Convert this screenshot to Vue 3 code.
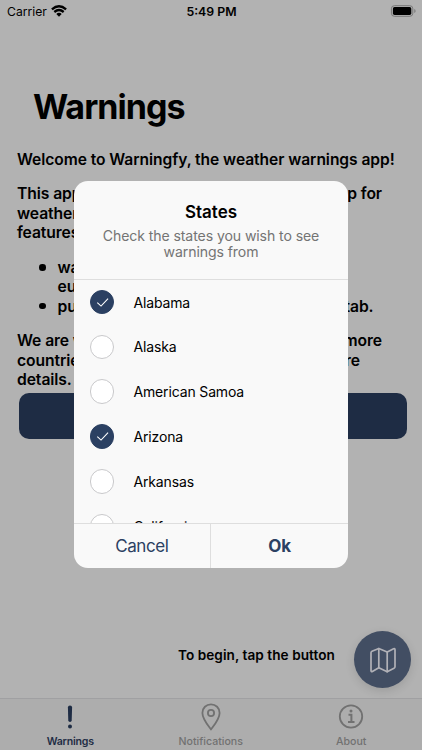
<script setup>
import { ref } from 'vue'

const states = ref([
  { name: 'Alabama', checked: true },
  { name: 'Alaska', checked: false },
  { name: 'American Samoa', checked: false },
  { name: 'Arizona', checked: true },
  { name: 'Arkansas', checked: false },
  { name: 'California', checked: false },
])
</script>

<template>
  <div class="screen">
    <header class="status">
      <div class="carrier">
        <span>Carrier</span>
        <svg class="wifi" viewBox="0 0 16 12">
          <path d="M.9 4.3Q8-1.9 15.1 4.3M3.3 7Q8 3.1 12.7 7" fill="none" stroke="#000" stroke-width="2.3" />
          <path d="M5.3 8.9Q8 6.7 10.7 8.9L8 11.7Z" />
        </svg>
      </div>
      <span class="clock">5:49 PM</span>
      <svg class="battery" viewBox="0 0 26 12">
        <rect x="1.4" y="0.7" width="21.4" height="10.6" rx="3" fill="none" stroke="#777" stroke-width="1" />
        <rect x="2.9" y="2.1" width="18.4" height="7.8" rx="1.6" />
        <path d="M24.3 4Q25.6 4.5 25.6 6T24.3 8Z" fill="#777" />
      </svg>
    </header>

    <main class="content">
      <h1>Warnings</h1>
      <p class="welcome">Welcome to Warningfy, the weather warnings app!</p>
      <div class="copy intro">
        <div class="line"><span>This app is an</span><span>app for</span></div>
        <div class="line">weather warnings</div>
        <div class="line">features:</div>
      </div>
      <ul class="copy">
        <li>
          <div class="line">warnings</div>
          <div class="line">europe</div>
        </li>
        <li>
          <div class="line push"><span>push</span><span>tab.</span></div>
        </li>
      </ul>
      <div class="copy more">
        <div class="line"><span>We are working</span><span>more</span></div>
        <div class="line short"><span>countries</span><span>more</span></div>
        <div class="line">details.</div>
      </div>
      <button class="primary" aria-label="Select states"></button>
      <div class="begin">
        <span>To begin, tap the button</span>
        <button class="fab" aria-label="Map">
          <svg viewBox="0 0 28 28" fill="none" stroke="#b1b1b7" stroke-width="1.7" stroke-linejoin="round" stroke-linecap="round">
            <path d="M9.8 2.5 3 5.2Q2 5.7 2 6.8V24.5Q2 26 3.4 25.4L9.8 21.7 18.2 25.7 25 22.3Q26 21.8 26 20.8V3.7Q26 2.1 24.6 2.8L18.2 6Z" />
            <path d="M9.8 2.5V21.7M18.2 6V25.7" />
          </svg>
        </button>
      </div>
    </main>

    <nav class="tabs">
      <a class="tab active">
        <svg viewBox="0 0 28 28" fill="#1e2c44">
          <path d="M11.9 4.6Q11.9 2.6 14 2.6T16.1 4.6L15.7 17.6Q15.6 19 14 19T12.3 17.6Z" />
          <circle cx="14" cy="23.6" r="2" />
        </svg>
        <span>Warnings</span>
      </a>
      <a class="tab">
        <svg viewBox="0 0 28 28" fill="none" stroke="#717171" stroke-width="1.8">
          <path d="M14 26.5C11.3 22.8 5.4 15.7 5.4 9.9C5.4 5 9.2 1.3 14 1.3S22.6 5 22.6 9.9C22.6 15.7 16.7 22.8 14 26.5Z" stroke-linejoin="round" />
          <circle cx="14" cy="10" r="3.1" />
        </svg>
        <span>Notifications</span>
      </a>
      <a class="tab">
        <svg viewBox="0 0 28 28" fill="none" stroke="#717171" stroke-width="1.8">
          <circle cx="14" cy="13.5" r="11.2" />
          <path d="M11.5 11.7H14.4V19M11 19H17.5" stroke-width="2" />
          <circle cx="14" cy="8" r="1.5" fill="#717171" stroke="none" />
        </svg>
        <span>About</span>
      </a>
    </nav>

    <section class="dialog" role="dialog">
      <div class="head">
        <h2>States</h2>
        <p>Check the states you wish to see<br />warnings from</p>
      </div>
      <div class="list">
        <label v-for="s in states" :key="s.name" class="row" @click="s.checked = !s.checked">
          <span class="check" :class="{ on: s.checked }">
            <svg v-if="s.checked" viewBox="0 0 24 24">
              <path d="M6.7 12.4 10.7 16.1 18.2 8.2" fill="none" stroke="#fff" stroke-width="1.15" />
            </svg>
          </span>
          <span class="name">{{ s.name }}</span>
        </label>
      </div>
      <div class="actions">
        <button class="cancel">Cancel</button>
        <button class="ok">Ok</button>
      </div>
    </section>
  </div>
</template>

<style>
body {
  margin: 0;
}
</style>

<style scoped>
* {
  box-sizing: border-box;
}
.screen {
  position: relative;
  display: flex;
  flex-direction: column;
  width: 422px;
  height: 750px;
  overflow: hidden;
  background: #b2b2b2;
  color: #000;
  font-family: Inter, "Liberation Sans", sans-serif;
  white-space: nowrap;
}
h1, h2, p, ul {
  margin: 0;
  padding: 0;
  font-weight: inherit;
}
button {
  border: 0;
  padding: 0;
  font-family: inherit;
}
svg {
  display: block;
}
.status {
  display: grid;
  grid-template-columns: 1fr auto 1fr;
  align-items: center;
  height: 22px;
  padding: 0 6px 0 7px;
}
.carrier {
  display: flex;
  align-items: center;
  gap: 4px;
  font-size: 12.2px;
}
.wifi {
  width: 16px;
  height: 12px;
  margin-top: -1px;
}
.clock {
  font-size: 12.3px;
  font-weight: 600;
}
.battery {
  width: 26px;
  height: 12px;
  justify-self: end;
  margin-top: -1px;
}
.content {
  flex: 1;
  display: flex;
  flex-direction: column;
  padding: 0 17px;
}
h1 {
  margin: 63.5px 0 0 16px;
  font-size: 34px;
  line-height: 42px;
  font-weight: 700;
  letter-spacing: -0.95px;
}
.welcome {
  margin-top: 22px;
  font-size: 15.6px;
  line-height: 19.5px;
  font-weight: 600;
  letter-spacing: -0.06px;
}
.copy {
  font-size: 15.7px;
  line-height: 19.3px;
  font-weight: 600;
  letter-spacing: -0.1px;
}
.intro {
  margin-top: 15.4px;
}
.line {
  display: flex;
  justify-content: space-between;
  width: 365px;
}
ul {
  margin-top: 15.8px;
  padding-left: 40.5px;
  list-style: none;
}
li::before {
  content: "";
  float: left;
  width: 6.5px;
  height: 6.5px;
  margin: 6px 0 0 -18.5px;
  border-radius: 50%;
  background: #000;
}
.push {
  width: 316px;
}
.more {
  margin-top: 15.5px;
}
.short {
  width: 343px;
}
.primary {
  width: 388.6px;
  height: 45.6px;
  margin: 3.8px 0 0 1.6px;
  flex: none;
  border-radius: 10px;
  background: #1e2c44;
}
.begin {
  display: flex;
  align-items: center;
  justify-content: flex-end;
  gap: 19px;
  margin: auto -6px 10px 0;
  font-size: 13.6px;
  font-weight: 600;
  letter-spacing: 0.06px;
}
.begin span {
  margin-top: -9px;
}
.fab {
  display: grid;
  place-items: center;
  width: 57px;
  height: 57px;
  border-radius: 50%;
  background: #424e63;
  box-shadow: 0 3px 10px rgba(0, 0, 0, 0.12);
}
.fab svg {
  width: 28px;
  height: 28px;
}
.tabs {
  display: grid;
  grid-template-columns: repeat(3, 140.5px);
  height: 52px;
  border-top: 1px solid #a0a0a2;
  background: #adadad;
}
.tab {
  display: flex;
  flex-direction: column;
  align-items: center;
  padding-top: 4px;
  color: #717171;
  font-size: 10.6px;
  font-weight: 500;
}
.tab svg {
  width: 28px;
  height: 28px;
}
.tab span {
  line-height: 14px;
  margin-top: 4px;
}
.active {
  color: #1e2c44;
  font-weight: 600;
  letter-spacing: -0.2px;
}
.dialog {
  position: absolute;
  left: 73.7px;
  top: 181.4px;
  display: flex;
  flex-direction: column;
  width: 274.6px;
  height: 387px;
  overflow: hidden;
  border-radius: 14px;
  background: #f9f9f9;
}
.head {
  height: 98.2px;
  flex: none;
  padding-top: 20.8px;
  text-align: center;
  border-bottom: 1px solid #dedede;
}
h2 {
  font-size: 17px;
  line-height: 21px;
  font-weight: 600;
}
.head p {
  margin-top: 5px;
  font-size: 14.1px;
  line-height: 16.3px;
  letter-spacing: -0.1px;
  color: #747474;
}
.list {
  flex: 1;
  min-height: 0;
  overflow: hidden;
}
.row {
  display: flex;
  align-items: center;
  gap: 19px;
  height: 44.85px;
  padding-left: 16.3px;
  font-size: 14px;
  letter-spacing: -0.15px;
}
.check {
  width: 24.5px;
  height: 24.5px;
  border: 1px solid #c9c9cb;
  border-radius: 50%;
  background: #fff;
}
.check.on {
  border-color: #2b4062;
  background: #2b4062;
}
.actions {
  display: grid;
  grid-template-columns: 1fr 1fr;
  height: 45.5px;
  border-top: 1px solid #dedede;
}
.actions button {
  padding-bottom: 0;
  background: transparent;
  color: #2b4062;
  font-size: 17px;
  letter-spacing: -0.4px;
}
.actions .cancel {
  border-right: 1px solid #dedede;
}
.actions .ok {
  font-weight: 700;
  letter-spacing: 0;
}
</style>
